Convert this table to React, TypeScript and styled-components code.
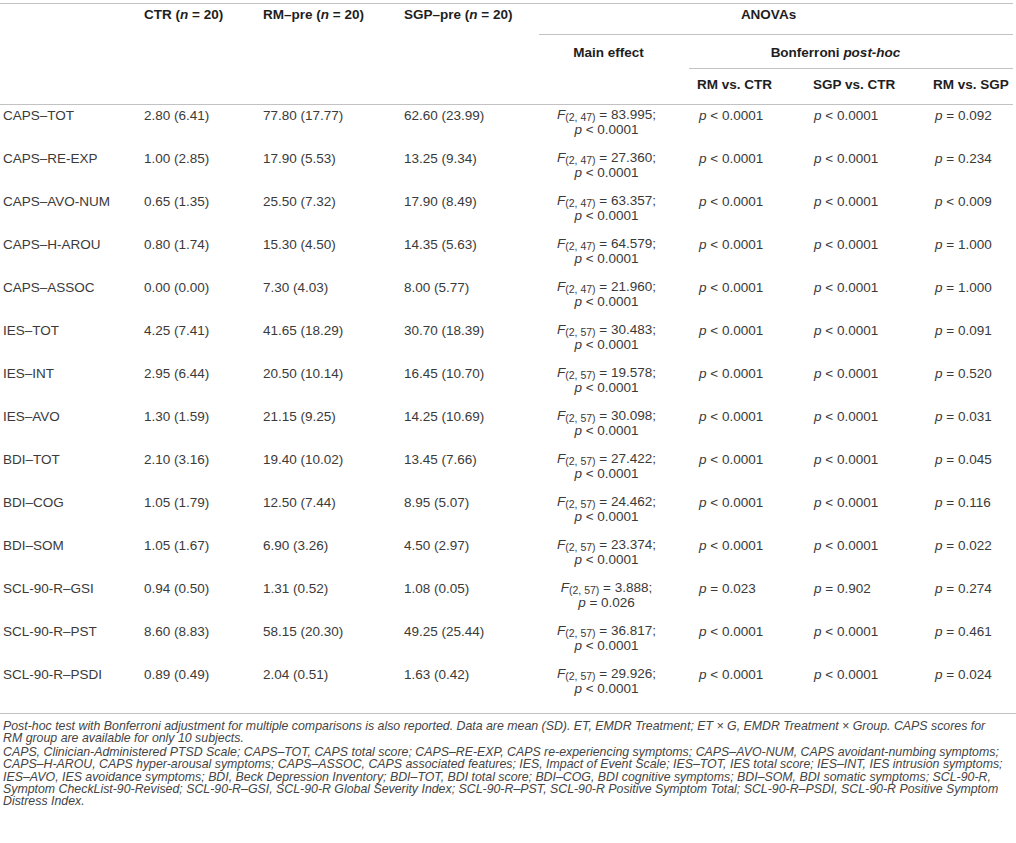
import React from "react";
import styled, { createGlobalStyle } from "styled-components";

const Global = createGlobalStyle`
  html, body { margin: 0; padding: 0; background: #ffffff; }
  body {
    font-family: "Liberation Sans", Arial, Helvetica, sans-serif;
    color: #3c3c3c;
  }
`;

const RULE = "#c2c2c2";

const Page = styled.div`
  width: 1016px;
  padding-top: 3px;
`;

const Table = styled.table`
  width: 1013px;
  table-layout: fixed;
  border-collapse: separate;
  border-spacing: 0;
  border-top: 1px solid ${RULE};
  font-size: 13.5px;
`;

const Col = styled.col<{ $w: number }>`
  width: ${(p) => p.$w}px;
`;

const Th = styled.th<{
  $pt?: number;
  $pb?: number;
  $pl?: number;
  $pr?: number;
  $center?: boolean;
  $rule?: boolean;
}>`
  padding: ${(p) => p.$pt ?? 3}px ${(p) => p.$pr ?? 0}px ${(p) => p.$pb ?? 0}px
    ${(p) => p.$pl ?? 0}px;
  text-align: ${(p) => (p.$center ? "center" : "left")};
  vertical-align: top;
  font-weight: bold;
  line-height: 16px;
  color: #1e1e1e;
  white-space: nowrap;
  border-bottom: ${(p) => (p.$rule ? `1px solid ${RULE}` : "none")};
`;

const Row = styled.tr`
  height: 43px;
`;

const Td = styled.td<{ $pl?: number; $pr?: number; $center?: boolean }>`
  padding: 4px ${(p) => p.$pr ?? 0}px 0 ${(p) => p.$pl ?? 0}px;
  vertical-align: top;
  text-align: ${(p) => (p.$center ? "center" : "left")};
  line-height: 14px;
  white-space: nowrap;
  color: #3a3a3a;
`;

const EffectCell = styled(Td)`
  padding-top: 3px;
  line-height: 14.5px;
`;

const Line = styled.span`
  display: block;
`;

const Sub = styled.sub`
  font-size: 10.5px;
  line-height: 0;
  vertical-align: -2px;
`;

const Note = styled.div`
  margin-top: 6px;
  width: 1013px;
  border-top: 1px solid ${RULE};
  padding: 6px 0 0 3px;
  font-size: 12.35px;
  font-style: italic;
  line-height: 12.4px;
  color: #444444;
`;

const Para = styled.p`
  margin: 0 0 1px 0;
`;

const NoteLine = styled.span`
  display: block;
  white-space: nowrap;
`;

type DataRow = {
  label: string;
  ctr: string;
  rm: string;
  sgp: string;
  df: string;
  f: string;
  p: string;
  rmCtr: string;
  sgpCtr: string;
  rmSgp: string;
};

const rows: DataRow[] = [
  { label: "CAPS–TOT", ctr: "2.80 (6.41)", rm: "77.80 (17.77)", sgp: "62.60 (23.99)", df: "(2, 47)", f: "83.995", p: "< 0.0001", rmCtr: "< 0.0001", sgpCtr: "< 0.0001", rmSgp: "= 0.092" },
  { label: "CAPS–RE-EXP", ctr: "1.00 (2.85)", rm: "17.90 (5.53)", sgp: "13.25 (9.34)", df: "(2, 47)", f: "27.360", p: "< 0.0001", rmCtr: "< 0.0001", sgpCtr: "< 0.0001", rmSgp: "= 0.234" },
  { label: "CAPS–AVO-NUM", ctr: "0.65 (1.35)", rm: "25.50 (7.32)", sgp: "17.90 (8.49)", df: "(2, 47)", f: "63.357", p: "< 0.0001", rmCtr: "< 0.0001", sgpCtr: "< 0.0001", rmSgp: "< 0.009" },
  { label: "CAPS–H-AROU", ctr: "0.80 (1.74)", rm: "15.30 (4.50)", sgp: "14.35 (5.63)", df: "(2, 47)", f: "64.579", p: "< 0.0001", rmCtr: "< 0.0001", sgpCtr: "< 0.0001", rmSgp: "= 1.000" },
  { label: "CAPS–ASSOC", ctr: "0.00 (0.00)", rm: "7.30 (4.03)", sgp: "8.00 (5.77)", df: "(2, 47)", f: "21.960", p: "< 0.0001", rmCtr: "< 0.0001", sgpCtr: "< 0.0001", rmSgp: "= 1.000" },
  { label: "IES–TOT", ctr: "4.25 (7.41)", rm: "41.65 (18.29)", sgp: "30.70 (18.39)", df: "(2, 57)", f: "30.483", p: "< 0.0001", rmCtr: "< 0.0001", sgpCtr: "< 0.0001", rmSgp: "= 0.091" },
  { label: "IES–INT", ctr: "2.95 (6.44)", rm: "20.50 (10.14)", sgp: "16.45 (10.70)", df: "(2, 57)", f: "19.578", p: "< 0.0001", rmCtr: "< 0.0001", sgpCtr: "< 0.0001", rmSgp: "= 0.520" },
  { label: "IES–AVO", ctr: "1.30 (1.59)", rm: "21.15 (9.25)", sgp: "14.25 (10.69)", df: "(2, 57)", f: "30.098", p: "< 0.0001", rmCtr: "< 0.0001", sgpCtr: "< 0.0001", rmSgp: "= 0.031" },
  { label: "BDI–TOT", ctr: "2.10 (3.16)", rm: "19.40 (10.02)", sgp: "13.45 (7.66)", df: "(2, 57)", f: "27.422", p: "< 0.0001", rmCtr: "< 0.0001", sgpCtr: "< 0.0001", rmSgp: "= 0.045" },
  { label: "BDI–COG", ctr: "1.05 (1.79)", rm: "12.50 (7.44)", sgp: "8.95 (5.07)", df: "(2, 57)", f: "24.462", p: "< 0.0001", rmCtr: "< 0.0001", sgpCtr: "< 0.0001", rmSgp: "= 0.116" },
  { label: "BDI–SOM", ctr: "1.05 (1.67)", rm: "6.90 (3.26)", sgp: "4.50 (2.97)", df: "(2, 57)", f: "23.374", p: "< 0.0001", rmCtr: "< 0.0001", sgpCtr: "< 0.0001", rmSgp: "= 0.022" },
  { label: "SCL-90-R–GSI", ctr: "0.94 (0.50)", rm: "1.31 (0.52)", sgp: "1.08 (0.05)", df: "(2, 57)", f: "3.888", p: "= 0.026", rmCtr: "= 0.023", sgpCtr: "= 0.902", rmSgp: "= 0.274" },
  { label: "SCL-90-R–PST", ctr: "8.60 (8.83)", rm: "58.15 (20.30)", sgp: "49.25 (25.44)", df: "(2, 57)", f: "36.817", p: "< 0.0001", rmCtr: "< 0.0001", sgpCtr: "< 0.0001", rmSgp: "= 0.461" },
  { label: "SCL-90-R–PSDI", ctr: "0.89 (0.49)", rm: "2.04 (0.51)", sgp: "1.63 (0.42)", df: "(2, 57)", f: "29.926", p: "< 0.0001", rmCtr: "< 0.0001", sgpCtr: "< 0.0001", rmSgp: "= 0.024" },
];

const P = ({ v }: { v: string }) => (
  <>
    <i>p</i> {v}
  </>
);

export default function App() {
  return (
    <Page>
      <Global />
      <Table>
        <colgroup>
          <Col $w={144} />
          <Col $w={119} />
          <Col $w={141} />
          <Col $w={135} />
          <Col $w={150} />
          <Col $w={124} />
          <Col $w={120} />
          <Col $w={80} />
        </colgroup>
        <thead>
          <tr>
            <Th rowSpan={3} $rule />
            <Th rowSpan={3} $rule>
              CTR (<i>n</i> = 20)
            </Th>
            <Th rowSpan={3} $rule>
              RM–pre (<i>n</i> = 20)
            </Th>
            <Th rowSpan={3} $rule>
              SGP–pre (<i>n</i> = 20)
            </Th>
            <Th colSpan={4} $rule $center $pr={15} $pb={11}>
              ANOVAs
            </Th>
          </tr>
          <tr>
            <Th rowSpan={2} $rule $center $pr={11} $pt={10}>
              Main effect
            </Th>
            <Th colSpan={3} $rule $center $pr={31} $pt={10} $pb={7}>
              Bonferroni <i>post-hoc</i>
            </Th>
          </tr>
          <tr>
            <Th $rule $pt={8} $pb={11} $pl={8}>
              RM vs. CTR
            </Th>
            <Th $rule $pt={8} $pb={11}>
              SGP vs. CTR
            </Th>
            <Th $rule $pt={8} $pb={11}>
              RM vs. SGP
            </Th>
          </tr>
        </thead>
        <tbody>
          {rows.map((r) => (
            <Row key={r.label}>
              <Td $pl={3}>{r.label}</Td>
              <Td>{r.ctr}</Td>
              <Td>{r.rm}</Td>
              <Td>{r.sgp}</Td>
              <EffectCell $center $pr={15}>
                <Line>
                  <i>F</i>
                  <Sub>{r.df}</Sub> = {r.f};
                </Line>
                <Line>
                  <P v={r.p} />
                </Line>
              </EffectCell>
              <Td $pl={10}>
                <P v={r.rmCtr} />
              </Td>
              <Td $pl={1}>
                <P v={r.sgpCtr} />
              </Td>
              <Td $pl={2}>
                <P v={r.rmSgp} />
              </Td>
            </Row>
          ))}
        </tbody>
      </Table>
      <Note>
        <Para>
          <NoteLine>
            Post-hoc test with Bonferroni adjustment for multiple comparisons is also reported. Data are mean (SD). ET, EMDR Treatment; ET × G, EMDR Treatment × Group. CAPS scores for
          </NoteLine>
          <NoteLine>RM group are available for only 10 subjects.</NoteLine>
        </Para>
        <Para>
          <NoteLine>
            CAPS, Clinician-Administered PTSD Scale; CAPS–TOT, CAPS total score; CAPS–RE-EXP, CAPS re-experiencing symptoms; CAPS–AVO-NUM, CAPS avoidant-numbing symptoms;
          </NoteLine>
          <NoteLine>
            CAPS–H-AROU, CAPS hyper-arousal symptoms; CAPS–ASSOC, CAPS associated features; IES, Impact of Event Scale; IES–TOT, IES total score; IES–INT, IES intrusion symptoms;
          </NoteLine>
          <NoteLine>
            IES–AVO, IES avoidance symptoms; BDI, Beck Depression Inventory; BDI–TOT, BDI total score; BDI–COG, BDI cognitive symptoms; BDI–SOM, BDI somatic symptoms; SCL-90-R,
          </NoteLine>
          <NoteLine>
            Symptom CheckList-90-Revised; SCL-90-R–GSI, SCL-90-R Global Severity Index; SCL-90-R–PST, SCL-90-R Positive Symptom Total; SCL-90-R–PSDI, SCL-90-R Positive Symptom
          </NoteLine>
          <NoteLine>Distress Index.</NoteLine>
        </Para>
      </Note>
    </Page>
  );
}
